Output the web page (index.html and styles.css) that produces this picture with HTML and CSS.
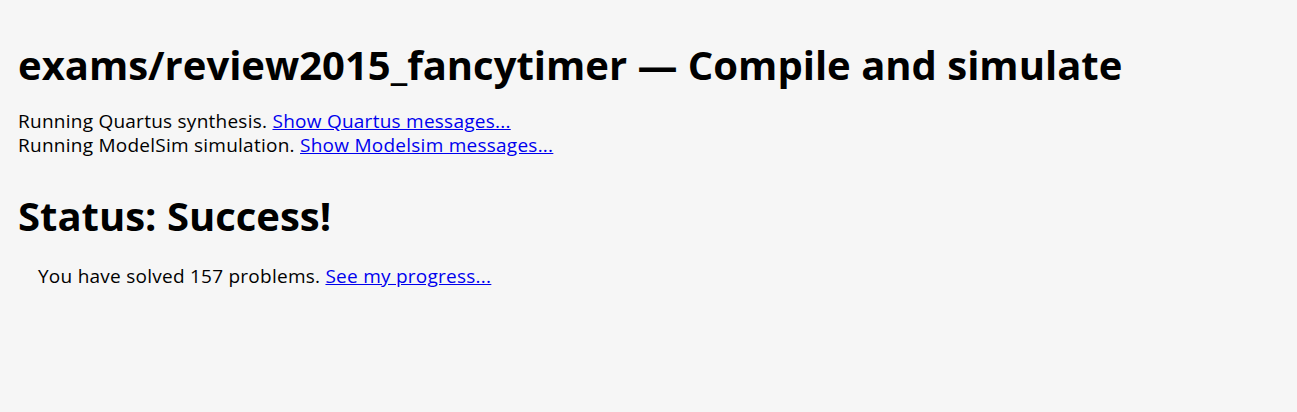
FILE: index.html
```html
<!DOCTYPE html>
<html>
<head>
<meta charset="utf-8">
<link rel="stylesheet" href="styles.css">
</head>
<body>
<div class="page">
  <h1 class="title">exams/review2015_fancytimer — Compile and simulate</h1>
  <div class="log">
    Running Quartus synthesis. <a href="#">Show Quartus messages...</a><br>
    Running ModelSim simulation. <a href="#">Show Modelsim messages...</a>
  </div>
  <h2 class="status">Status: Success!</h2>
  <div class="result">You have solved 157 problems. <a href="#">See my progress...</a></div>
</div>
</body>
</html>
```
FILE: styles.css
```css
html, body {
  margin: 0;
  padding: 0;
  background: #f6f6f6;
}
.page {
  padding: 38px 18px 20px;
  font-family: "Open Sans", "Liberation Sans", sans-serif;
  font-size: 19px;
  font-weight: 400;
  letter-spacing: 0.25px;
  line-height: 24px;
  color: #000;
}
.title {
  font-family: "Open Sans", sans-serif;
  font-weight: 700;
  font-size: 40px;
  letter-spacing: 0;
  line-height: 54px;
  margin: 0 0 17px;
}
.status {
  font-family: "Open Sans", sans-serif;
  font-weight: 700;
  font-size: 40px;
  letter-spacing: 0;
  line-height: 54px;
  margin: 32px 0 21px;
}
.result {
  margin-left: 20px;
}
a { color: #0000ee; }
```
